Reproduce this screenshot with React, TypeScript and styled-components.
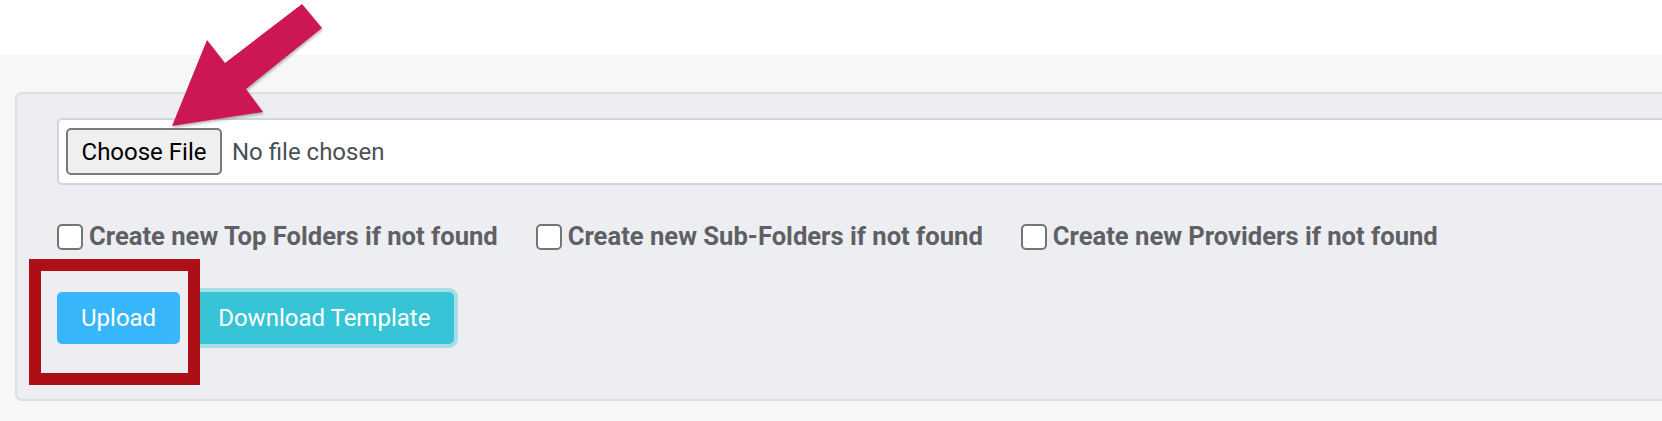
import React from "react";
import styled, { createGlobalStyle } from "styled-components";

const Global = createGlobalStyle`
  html, body { margin: 0; padding: 0; background: #fff; }
  body { font-family: Roboto, "Liberation Sans", sans-serif; }
`;

const Page = styled.div`
  position: relative;
  width: 1662px;
  height: 421px;
  overflow: hidden;
  background: #fff;
`;

const TopStrip = styled.div`
  height: 55px;
  background: #fff;
`;

const Section = styled.section`
  background: #f7f7f7;
  padding: 37px 0 20px 15px;
  overflow: hidden;
`;

const Card = styled.div`
  display: flex;
  flex-direction: column;
  margin-right: -140px;
  background: #edeef2;
  border: 2px solid #dcdee3;
  border-radius: 7px;
  padding: 24px 0 55px 40px;
`;

const FileField = styled.div`
  display: flex;
  align-items: center;
  gap: 10px;
  box-sizing: border-box;
  height: 67px;
  padding: 0 7px;
  background: #fff;
  border: 2px solid #d0d4da;
  border-radius: 5px;
`;

const ChooseButton = styled.button`
  box-sizing: border-box;
  width: 156px;
  height: 47px;
  margin: 0;
  padding: 0;
  background: #efefef;
  border: 2px solid #7a7a7a;
  border-radius: 5px;
  font-family: Roboto, "Liberation Sans", sans-serif;
  font-size: 24px;
  color: #000;
`;

const FileName = styled.span`
  font-size: 24px;
  color: #4a4f55;
`;

const CheckRow = styled.div`
  display: flex;
  align-items: center;
  gap: 38px;
  height: 26px;
  margin-top: 39px;
`;

const CheckItem = styled.label`
  display: flex;
  align-items: center;
  gap: 6px;
`;

const Box = styled.input`
  appearance: none;
  box-sizing: border-box;
  width: 26px;
  height: 26px;
  margin: 0;
  background: #fff;
  border: 2px solid #757575;
  border-radius: 5px;
`;

const CheckText = styled.span`
  font-size: 25.6px;
  font-weight: 700;
  line-height: 1;
  color: #5f6064;
`;

const ButtonRow = styled.div`
  display: flex;
  gap: 14px;
  margin-top: 42px;
`;

const ActionButton = styled.button<{ $variant: "primary" | "info" }>`
  height: 52px;
  margin: 0;
  padding: 0 24px;
  border: none;
  border-radius: 5px;
  font-family: Roboto, "Liberation Sans", sans-serif;
  font-size: 24px;
  color: #fff;
  background: ${(p) => (p.$variant === "primary" ? "#37b6fc" : "#36c4d6")};
  box-shadow: ${(p) => (p.$variant === "info" ? "0 0 0 4px #a6dde6" : "none")};
`;

const RedBox = styled.div`
  position: absolute;
  left: 29px;
  top: 259px;
  width: 171px;
  height: 126px;
  box-sizing: border-box;
  border: 12px solid #ae0f16;
`;

const ArrowSvg = styled.svg`
  position: absolute;
  left: 0;
  top: 0;
  filter: drop-shadow(1px 2px 1px rgba(0, 0, 0, 0.25));
`;

const options = [
  "Create new Top Folders if not found",
  "Create new Sub-Folders if not found",
  "Create new Providers if not found",
];

export default function App() {
  return (
    <>
      <Global />
      <Page>
        <TopStrip />
        <Section>
          <Card>
            <FileField>
              <ChooseButton type="button">Choose File</ChooseButton>
              <FileName>No file chosen</FileName>
            </FileField>
            <CheckRow>
              {options.map((o) => (
                <CheckItem key={o}>
                  <Box type="checkbox" />
                  <CheckText>{o}</CheckText>
                </CheckItem>
              ))}
            </CheckRow>
            <ButtonRow>
              <ActionButton $variant="primary">Upload</ActionButton>
              <ActionButton $variant="info">Download Template</ActionButton>
            </ButtonRow>
          </Card>
        </Section>
        <RedBox />
        <ArrowSvg width="340" height="140" viewBox="0 0 340 140">
          <polygon
            points="172,126 207,40 225,63 302,4 322,28 246,89 263,112"
            fill="#cd1753"
          />
        </ArrowSvg>
      </Page>
    </>
  );
}
